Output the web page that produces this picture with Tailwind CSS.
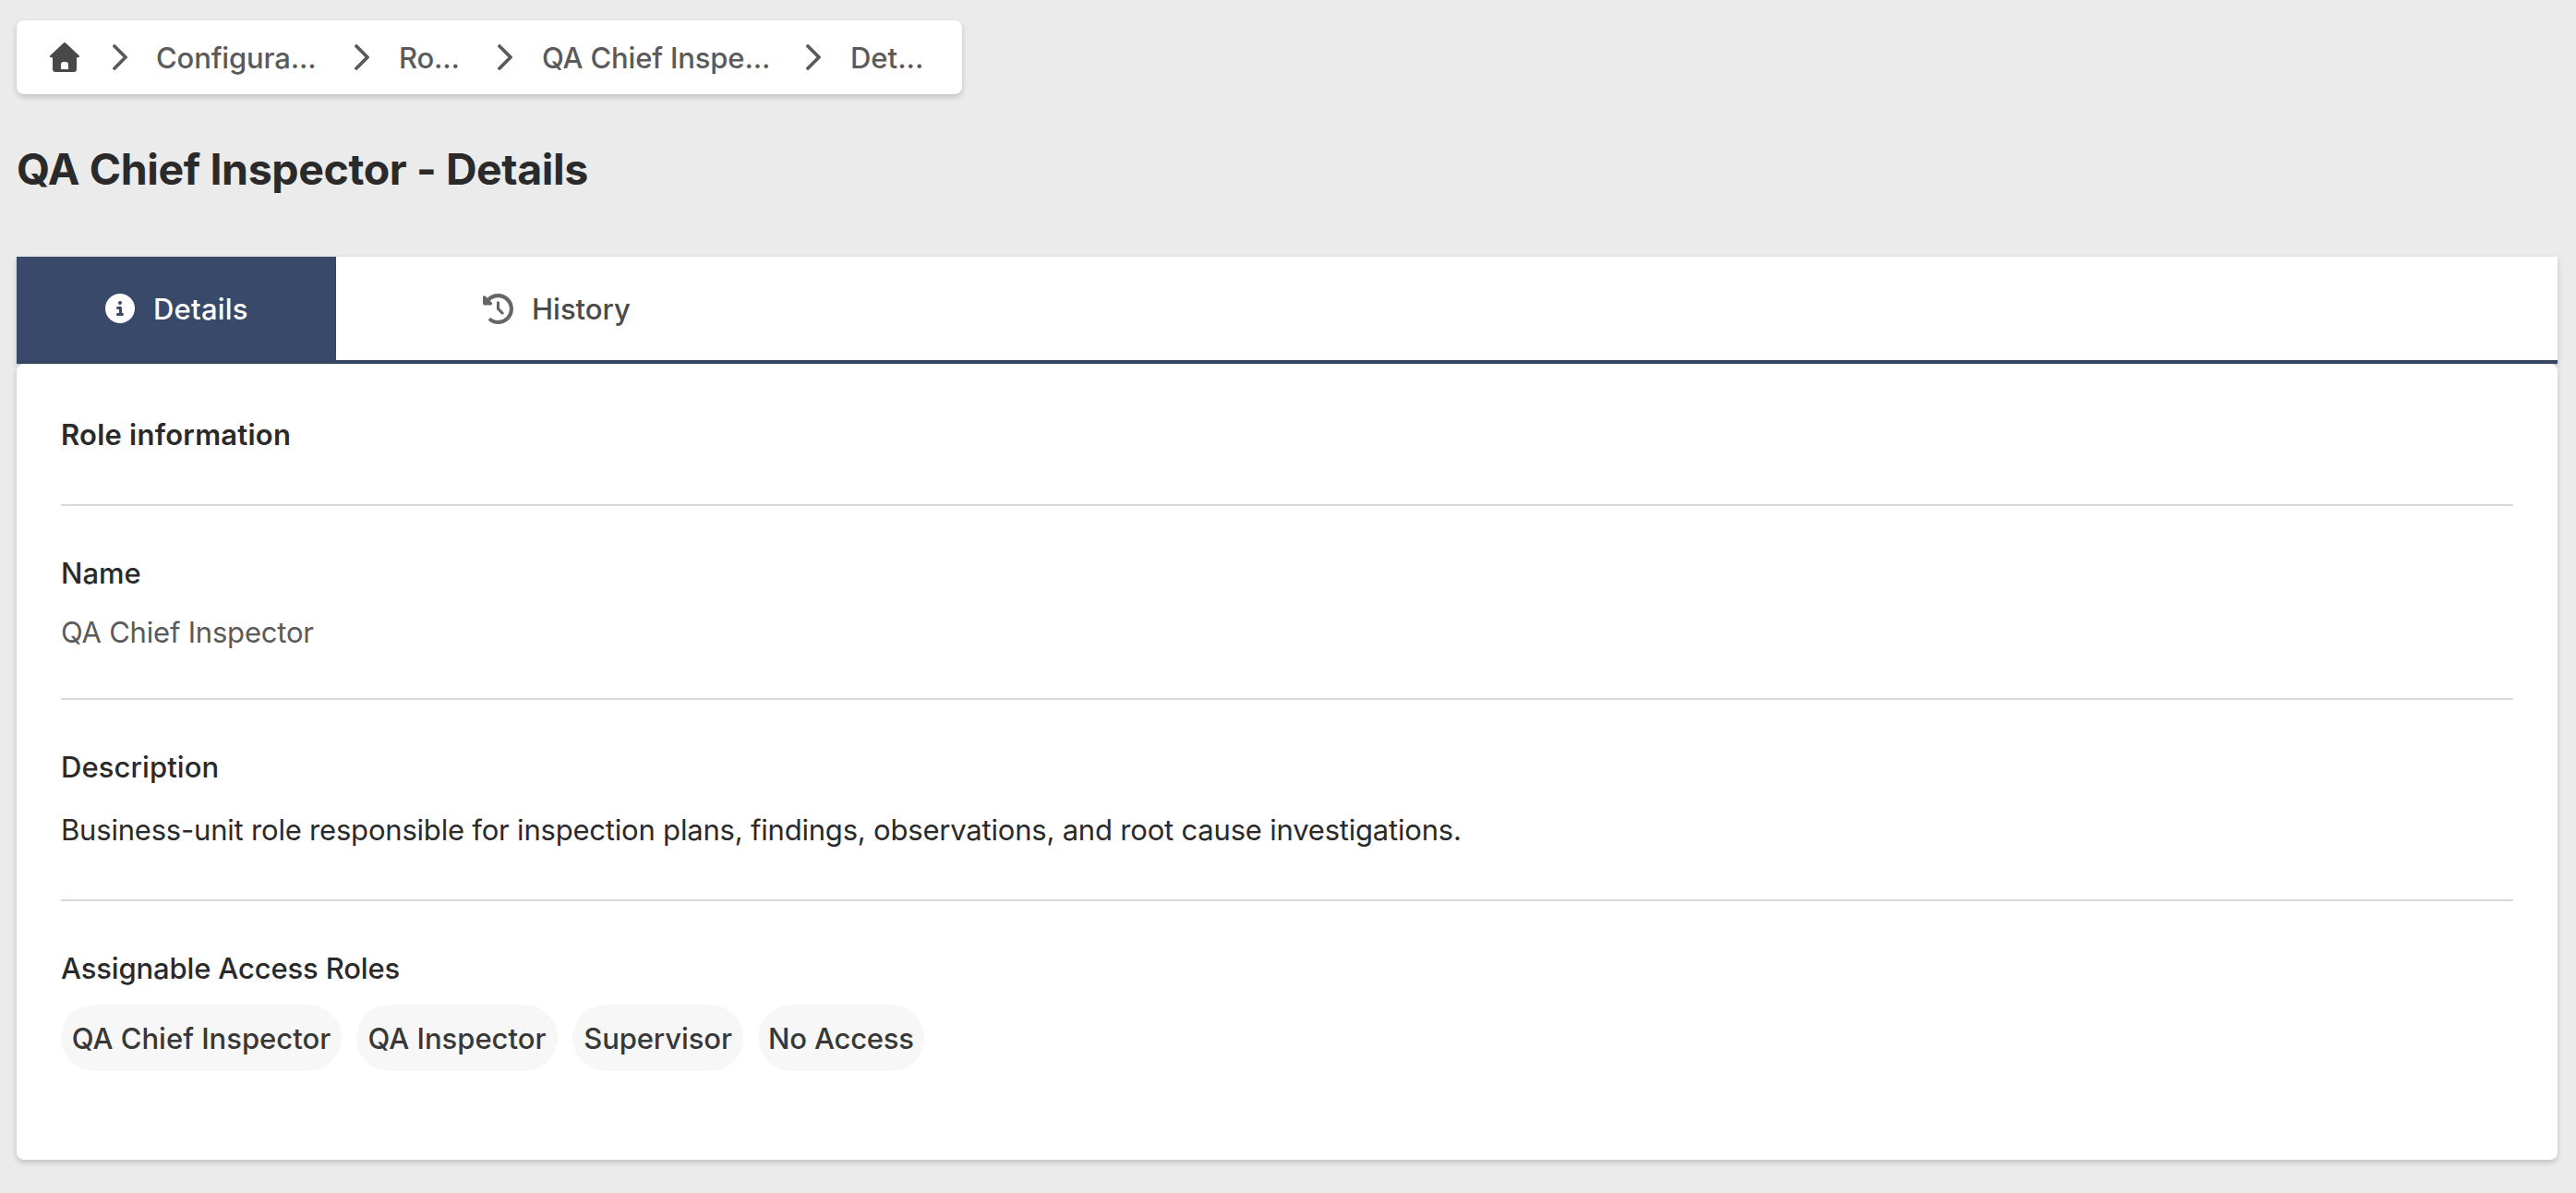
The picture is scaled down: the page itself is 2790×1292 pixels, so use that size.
<!DOCTYPE html>
<html lang="en">
<head>
    <meta charset="UTF-8">
    <meta name="viewport" content="width=device-width, initial-scale=1.0">
    <title>QA Chief Inspector - Details</title>
    <script src="https://cdn.jsdelivr.net/npm/@tailwindcss/browser@4"></script>
</head>
<body class="min-h-screen bg-[#ebebeb] pl-[18px] pr-5 pt-[22px] font-['Inter','Liberation_Sans',sans-serif] text-[31px] leading-[40px] text-[#2a2a2a]">
    <!-- Breadcrumb -->
    <nav class="flex h-20 w-[1024px] items-center rounded-lg bg-white pl-9 font-medium tracking-[-0.15px] text-[#5a5a5a] shadow-[0_3px_6px_rgba(0,0,0,0.18)]">
        <svg class="h-8 w-8 shrink-0" viewBox="0 0 32 32" fill="#484848">
            <path fill-rule="evenodd" d="M14.6.7a2 2 0 0 1 2.8 0L31.5 14c.9.9.4 2.3-.9 2.3H29V29a3 3 0 0 1-3 3H6a3 3 0 0 1-3-3V16.300H1.400C.1 16.300-.4 14.900.5 14zM12 29h8v-5a3 3 0 0 0-3-3h-2a3 3 0 0 0-3 3z"/>
        </svg>
        <svg class="ml-9 h-7 w-4 shrink-0" viewBox="0 0 16 28" fill="none" stroke="currentColor" stroke-width="3.800" stroke-linecap="round" stroke-linejoin="round"><path d="M2 2 14 14 2 26"/></svg>
        <a href="#" class="ml-[31px] w-[215px] pt-0.5 whitespace-nowrap">Configura...</a>
        <svg class="h-7 w-4 shrink-0" viewBox="0 0 16 28" fill="none" stroke="currentColor" stroke-width="3.800" stroke-linecap="round" stroke-linejoin="round"><path d="M2 2 14 14 2 26"/></svg>
        <a href="#" class="ml-8 w-[107px] pt-0.5 whitespace-nowrap">Ro...</a>
        <svg class="h-7 w-4 shrink-0" viewBox="0 0 16 28" fill="none" stroke="currentColor" stroke-width="3.800" stroke-linecap="round" stroke-linejoin="round"><path d="M2 2 14 14 2 26"/></svg>
        <a href="#" class="ml-8 w-[286px] pt-0.5 whitespace-nowrap">QA Chief Inspe...</a>
        <svg class="h-7 w-4 shrink-0" viewBox="0 0 16 28" fill="none" stroke="currentColor" stroke-width="3.800" stroke-linecap="round" stroke-linejoin="round"><path d="M2 2 14 14 2 26"/></svg>
        <a href="#" class="ml-8 pt-0.5 tracking-normal whitespace-nowrap">Det...</a>
    </nav>

    <h1 class="mt-[51px] text-[46.5px] leading-[60px] font-bold tracking-[-0.4px]">QA Chief Inspector - Details</h1>

    <!-- Tabs -->
    <div class="mt-[65px] shadow-[0_3px_6px_rgba(0,0,0,0.18)]">
        <div class="flex h-[116px] border-b-4 border-[#364765] bg-white font-medium">
            <button class="flex w-[346px] items-center bg-[#394969] pl-24 text-white">
                <svg class="mr-5 h-8 w-8" viewBox="0 0 512 512" fill="currentColor"><path d="M256 512a256 256 0 1 0 0-512 256 256 0 1 0 0 512zM216 336h24v-64h-24c-13.300 0-24-10.700-24-24s10.700-24 24-24h48c13.300 0 24 10.700 24 24v88h8c13.300 0 24 10.700 24 24s-10.700 24-24 24h-80c-13.300 0-24-10.700-24-24s10.700-24 24-24zm40-208a32 32 0 1 1 0 64 32 32 0 1 1 0-64z"/></svg>
                <span class="pt-0.5 tracking-[0.2px]">Details</span>
            </button>
            <button class="flex items-center pl-[159px] text-[#4a4a4a]">
                <svg class="mr-5 h-[33px] w-[33px]" viewBox="0 0 512 512" fill="#666"><path d="M75 75 41 41C25.900 25.900 0 36.600 0 57.900V168c0 13.300 10.700 24 24 24h110.100c21.400 0 32.100-25.900 17-41l-30.800-30.800C155 85.500 203 64 256 64c106 0 192 86 192 192s-86 192-192 192c-40.800 0-78.600-12.700-109.700-34.400-14.500-10.100-34.400-6.600-44.600 7.900s-6.600 34.400 7.900 44.600C151.200 495 201.700 512 256 512c141.400 0 256-114.600 256-256S397.400 0 256 0C185.300 0 121.300 28.700 75 75zm181 53c-13.300 0-24 10.700-24 24v104c0 6.400 2.500 12.500 7 17l72 72c9.400 9.400 24.600 9.400 33.900 0s9.400-24.600 0-33.900l-65-65V152c0-13.300-10.700-24-24-24z"/></svg>
                <span class="pt-0.5">History</span>
            </button>
        </div>
    </div>

    <!-- Role details -->
    <main class="h-[862px] rounded-lg bg-white px-12 pt-[57px] shadow-[0_3px_6px_rgba(0,0,0,0.18)]">
        <h2 class="font-semibold tracking-[0.23px]">Role information</h2>
        <section class="mt-[55px] border-t-2 border-[#d9d9d9] pt-[53px]">
            <h3 class="font-medium">Name</h3>
            <p class="mt-6 tracking-[-0.2px] text-[#5a5a5a]">QA Chief Inspector</p>
        </section>
        <section class="mt-[51px] border-t-2 border-[#d9d9d9] pt-[53px]">
            <h3 class="font-medium tracking-[0.1px]">Description</h3>
            <p class="mt-7 tracking-[-0.2px]">Business-unit role responsible for inspection plans, findings, observations, and root cause investigations.</p>
        </section>
        <section class="mt-[55px] border-t-2 border-[#d9d9d9] pt-[53px]">
            <h3 class="font-medium tracking-[-0.15px]">Assignable Access Roles</h3>
            <div class="mt-[19px] flex gap-4 font-medium text-[#383838]">
                <span class="flex h-[72px] w-[304px] items-center justify-center rounded-full bg-[#f7f7f7] pt-0.5 whitespace-nowrap">QA Chief Inspector</span>
                <span class="flex h-[72px] w-[218px] items-center justify-center rounded-full bg-[#f7f7f7] pt-0.5 whitespace-nowrap">QA Inspector</span>
                <span class="flex h-[72px] w-[185px] items-center justify-center rounded-full bg-[#f7f7f7] pt-0.5 tracking-[-0.1px] whitespace-nowrap">Supervisor</span>
                <span class="flex h-[72px] w-[180px] items-center justify-center rounded-full bg-[#f7f7f7] pt-0.5 tracking-[-0.2px] whitespace-nowrap">No Access</span>
            </div>
        </section>
    </main>
</body>
</html>
